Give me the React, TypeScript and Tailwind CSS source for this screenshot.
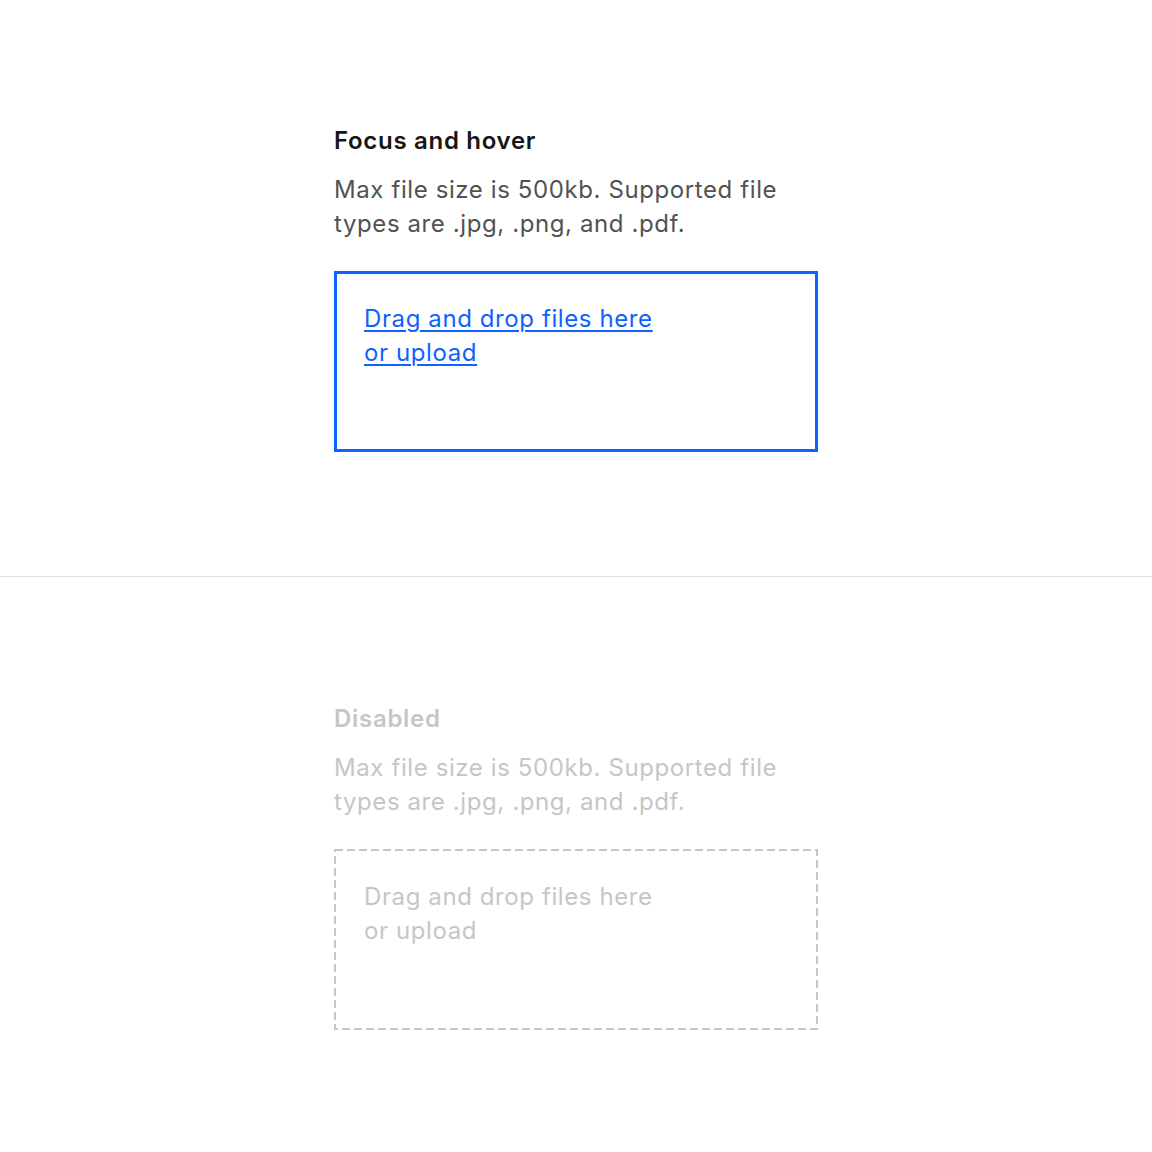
const sections = [
  { title: 'Focus and hover', disabled: false },
  { title: 'Disabled', disabled: true },
];

function DropZone({ disabled }: { disabled: boolean }) {
  if (disabled) {
    return (
      <div className="relative h-[181px] w-[484px] pl-[30px] pt-[31px]">
        {/* dashed outline */}
        <svg className="absolute inset-0 pointer-events-none" width="484" height="181">
          <rect x="1" y="1" width="482" height="179" fill="none" stroke="#c6c6c6" strokeWidth="2" strokeDasharray="8 4" />
        </svg>
        <p className="text-[24px] leading-[34px] tracking-[0.6px] text-[#c6c6c6]">
          Drag and drop files here
          <br />
          or upload
        </p>
      </div>
    );
  }
  return (
    <div className="h-[181px] w-[484px] border-[3px] border-[#0f62fe] pl-[27px] pt-[28px]">
      <p className="text-[24px] leading-[34px] tracking-[0.6px] text-[#0f62fe] underline underline-offset-[3px] decoration-[1.5px]">
        Drag and drop files here
        <br />
        or upload
      </p>
    </div>
  );
}

export default function App() {
  return (
    <div className="bg-white" style={{ fontFamily: 'Inter, "Noto Sans", sans-serif' }}>
      {sections.map((s, i) => (
        <div key={s.title}>
          {i > 0 && <div className="h-px bg-[#e0e0e0]" />}
          <section className={`flex items-center justify-center ${i > 0 ? 'h-[578px]' : 'h-[576px]'}`}>
            <div className="w-[484px]">
              <h2
                className={`mb-4 text-[24px] leading-[32px] font-semibold tracking-[0.7px] ${
                  s.disabled ? 'text-[#c6c6c6]' : 'text-[#161616]'
                }`}
              >
                {s.title}
              </h2>
              <p
                className={`mb-[30px] text-[24px] leading-[34px] tracking-[0.6px] ${
                  s.disabled ? 'text-[#c6c6c6]' : 'text-[#525252]'
                }`}
              >
                Max file size is 500kb. Supported file
                <br />
                types are .jpg, .png, and .pdf.
              </p>
              <DropZone disabled={s.disabled} />
            </div>
          </section>
        </div>
      ))}
    </div>
  );
}
